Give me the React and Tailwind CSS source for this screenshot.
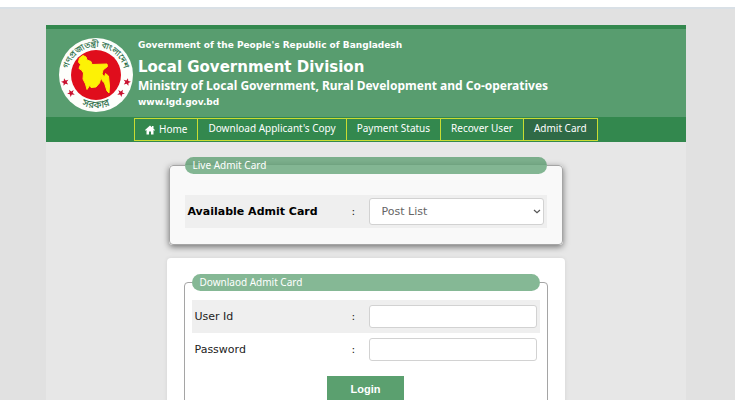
import React, { useState } from 'react';

const NAV_ITEMS = [
  { label: 'Home', icon: true },
  { label: "Download Applicant's Copy" },
  { label: 'Payment Status' },
  { label: 'Recover User' },
  { label: 'Admit Card', active: true }
];

const Star = ({ x, y, rotate = 0 }) => (
  <path
    transform={`translate(${x} ${y}) rotate(${rotate})`}
    d="M0-3.8 1-1.2 3.8-1.2 1.6.5 2.4 3.3 0 1.7-2.4 3.3-1.6.5-3.8-1.2-1-1.2Z"
    fill="#c8102e"
  />
);

const GovernmentSeal = () => (
  <svg
    className="h-[76px] w-[76px] shrink-0"
    viewBox="0 0 76 76"
    role="img"
    aria-label="Government seal of Bangladesh">
    <defs>
      <path id="seal-top" d="M9.5 41A28.6 28.6 0 1 1 66.5 41" />
      <path id="seal-bottom" d="M13 60A33.5 33.5 0 0 0 63 60" />
    </defs>
    <circle cx="38" cy="38" r="37" fill="#fdfefb" />
    <circle cx="38" cy="38" r="25" fill="#e00d1c" />
    <path
      d="M21.5 21 25 18.5 28 20 29 23 33 24.5 34 27.5 49 27 49.5 29.5 45 33 44 37 46.5 40 47.5 36.5 50.5 39 51.5 49 51 56 49 54 46.5 46 44.5 44 43 40.5 41.5 46 38 50 33 50.5 32 48 29 52.5 27.5 47 25 42 25.5 36 23.5 33 21 31.5 22.5 27.5 20.5 25Z"
      fill="#fdf205"
      stroke="#fdf205"
      strokeLinejoin="round"
    />
    <g
      fill="#2c6e49"
      stroke="#2c6e49"
      strokeWidth="0.1"
      fontSize="8.5"
      fontFamily="'Noto Sans Bengali', 'Noto Sans', sans-serif">
      <text>
        <textPath href="#seal-top" startOffset="50%" textAnchor="middle">
          গণপ্রজাতন্ত্রী বাংলাদেশ
        </textPath>
      </text>
      <text fontSize="10">
        <textPath href="#seal-bottom" startOffset="50%" textAnchor="middle">
          সরকার
        </textPath>
      </text>
    </g>
    <Star x={7} y={45} rotate={-15} />
    <Star x={13} y={56} rotate={-30} />
    <Star x={69} y={45} rotate={15} />
    <Star x={63} y={56} rotate={30} />
  </svg>
);

const HomeIcon = () => (
  <svg className="mr-1 h-[10px] w-[10px]" viewBox="0 0 20 18" fill="currentColor" aria-hidden="true">
    <path d="M10 0 0 9l1.3 1.4L3 9v9h5v-6h4v6h5V9l1.7 1.4L20 9l-3-2.7V1h-3v2.6Z" />
  </svg>
);

const Header = () => (
  <header className="border-t-4 border-[#33884e] bg-[#589d6f] text-white">
    <div className="flex h-[88px] items-start gap-1 pt-2 pl-3">
      <GovernmentSeal />
      <div className="font-bold">
        <p className="text-[9px] leading-4">Government of the People's Republic of Bangladesh</p>
        <h1 className="mt-1 text-[15px] leading-5">Local Government Division</h1>
        <p className="mt-px font-['Noto_Sans'] text-[12px] leading-4">
          Ministry of Local Government, Rural Development and Co-operatives
        </p>
        <p className="text-[9px] leading-4">www.lgd.gov.bd</p>
      </div>
    </div>
    <nav className="flex bg-[#33884e] py-px pl-[89px] font-['Noto_Sans']">
      {NAV_ITEMS.map(({ label, icon, active }) => (
        <a
          key={label}
          href="#"
          className={`-ml-px flex h-[23px] items-center border border-[#c9dc32] px-[10px] text-[10px] ${
            icon ? '' : 'pb-[2px]'
          } ${active ? 'bg-[#2f6a46]' : ''}`}>
          {icon && <HomeIcon />}
          {label}
        </a>
      ))}
    </nav>
  </header>
);

const Legend = ({ children }) => (
  <legend className="h-[17px] w-full rounded-full bg-[#33884e]/60 px-2 font-['Noto_Sans'] text-[10px] leading-4 text-white">
    {children}
  </legend>
);

const FieldRow = ({ id, label, bold, shaded, children }) => (
  <div className={`flex h-[33px] items-center px-[3px] ${shaded ? 'bg-[#efefef]' : ''}`}>
    <label
      htmlFor={id}
      className={`flex-1 pt-px text-[11px] ${bold ? 'font-bold text-black' : ''}`}>
      {label}
    </label>
    <span className="w-[17px] pt-px text-[11px]">:</span>
    {children}
  </div>
);

const App = () => {
  const [post, setPost] = useState('');
  const [userId, setUserId] = useState('');
  const [password, setPassword] = useState('');

  return (
    <div className="h-screen overflow-hidden border-t-[7px] border-white bg-[#e1e1e1] font-['DejaVu_Sans'] text-[#222]">
      <div className="h-full border-t-2 border-[#d9e0e6] pt-4 pr-[3px]">
        <div className="mx-auto min-h-full w-full max-w-[640px] bg-[#e7e7e7]">
          <Header />
          <main className="flex flex-col items-center pt-[15px]">
            <fieldset className="mr-px w-full max-w-[394px] rounded-[4px] border border-[#a5a5a5] bg-[#f9f9f9] px-[15px] pb-4 shadow-[0_2px_6px_rgba(0,0,0,0.5)]">
              <Legend>Live Admit Card</Legend>
              <div className="pt-[21px]">
                <FieldRow id="post" label="Available Admit Card" bold shaded>
                  <div className="relative w-[175px]">
                    <select
                      id="post"
                      value={post}
                      onChange={(e) => setPost(e.target.value)}
                      className="h-[27px] w-full appearance-none rounded-[3px] border border-[#d2d2d2] bg-white px-3 text-[11px] text-[#666]">
                      <option value="">Post List</option>
                    </select>
                    <svg
                      className="pointer-events-none absolute top-[10px] right-[3px] h-2 w-2"
                      viewBox="0 0 8 8"
                      fill="none"
                      stroke="#555"
                      strokeWidth="1.2">
                      <path d="M1 2 4 4.8 7 2" />
                    </svg>
                  </div>
                </FieldRow>
              </div>
            </fieldset>

            <form
              onSubmit={(e) => e.preventDefault()}
              className="mt-[13px] mr-px w-full max-w-[398px] rounded-[4px] bg-white px-[17px] pt-4 pb-6 shadow-[0_0_4px_rgba(0,0,0,0.08)]">
              <fieldset className="rounded-[4px] border border-[#a5a5a5] px-[7px] pb-5">
                <Legend>Downlaod Admit Card</Legend>
                <div className="pt-[9px]">
                  <FieldRow id="user-id" label="User Id" shaded>
                    <input
                      id="user-id"
                      value={userId}
                      onChange={(e) => setUserId(e.target.value)}
                      className="h-[23px] w-[168px] rounded-[3px] border border-[#d2d2d2] bg-white px-2 text-[11px]"
                    />
                  </FieldRow>
                  <FieldRow id="password" label="Password">
                    <input
                      id="password"
                      type="password"
                      value={password}
                      onChange={(e) => setPassword(e.target.value)}
                      className="h-[23px] w-[168px] rounded-[3px] border border-[#d2d2d2] bg-white px-2 text-[11px]"
                    />
                  </FieldRow>
                </div>
                <button
                  type="submit"
                  className="mx-auto mt-[10px] block h-[27px] w-[77px] bg-[#5ba06f] font-['Liberation_Sans'] text-[11px] font-bold text-white">
                  Login
                </button>
              </fieldset>
            </form>
          </main>
        </div>
      </div>
    </div>
  );
};

export default App;
